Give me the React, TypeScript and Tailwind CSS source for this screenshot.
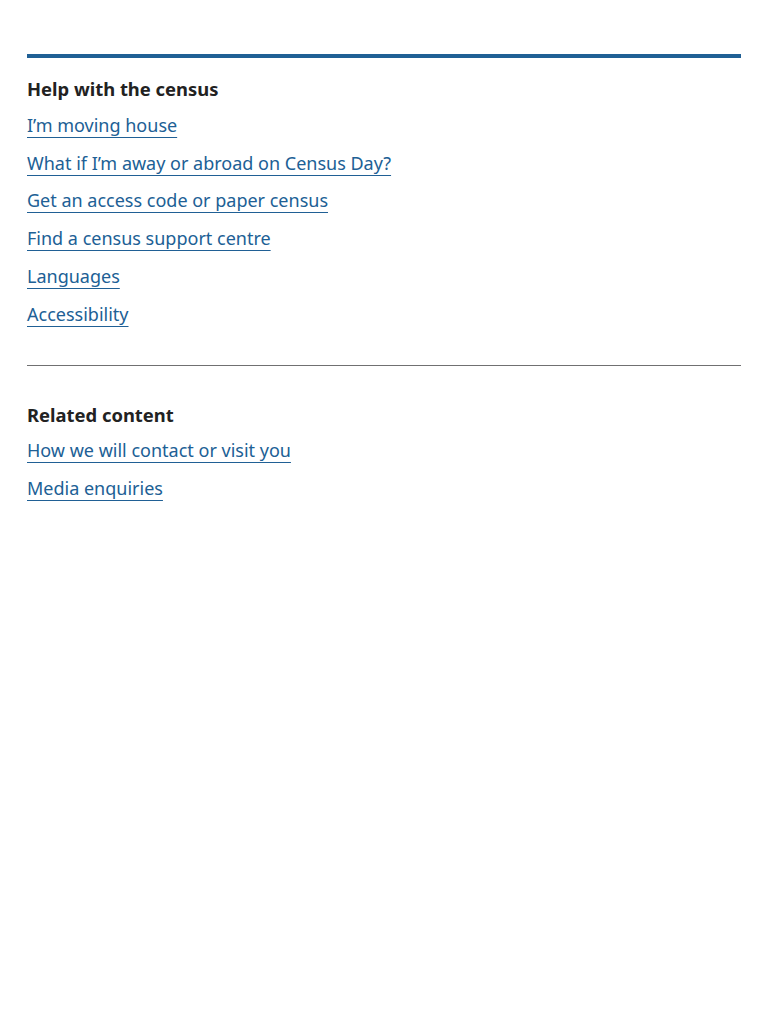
const helpLinks = [
  "I’m moving house",
  "What if I’m away or abroad on Census Day?",
  "Get an access code or paper census",
  "Find a census support centre",
  "Languages",
  "Accessibility",
]

const relatedLinks = ["How we will contact or visit you", "Media enquiries"]

function LinkList({ items }: { items: string[] }) {
  return (
    <ul className="flex flex-col gap-[9px]">
      {items.map((item) => (
        <li key={item}>
          <a
            href="#"
            className="text-[18px] leading-[28.8px] text-[#206095] underline decoration-1 underline-offset-[5px]"
          >
            {item}
          </a>
        </li>
      ))}
    </ul>
  )
}

export default function App() {
  return (
    <div className="min-h-screen bg-white px-[27px] pt-[54px]" style={{ fontFamily: '"Noto Sans", "Open Sans", sans-serif' }}>
      <aside>
        <div className="h-[4px] bg-[#206095]" />
        <h2 className="mt-[17px] mb-[7px] text-[18.4px] font-bold leading-[28.8px] text-[#222222]">Help with the census</h2>
        <LinkList items={helpLinks} />
      </aside>

      <hr className="mt-[36px] border-0 border-t border-[#707071]" />

      <aside className="pt-[35px]">
        <h2 className="mb-[7px] text-[18.4px] font-bold leading-[28.8px] text-[#222222]">Related content</h2>
        <LinkList items={relatedLinks} />
      </aside>
    </div>
  )
}
